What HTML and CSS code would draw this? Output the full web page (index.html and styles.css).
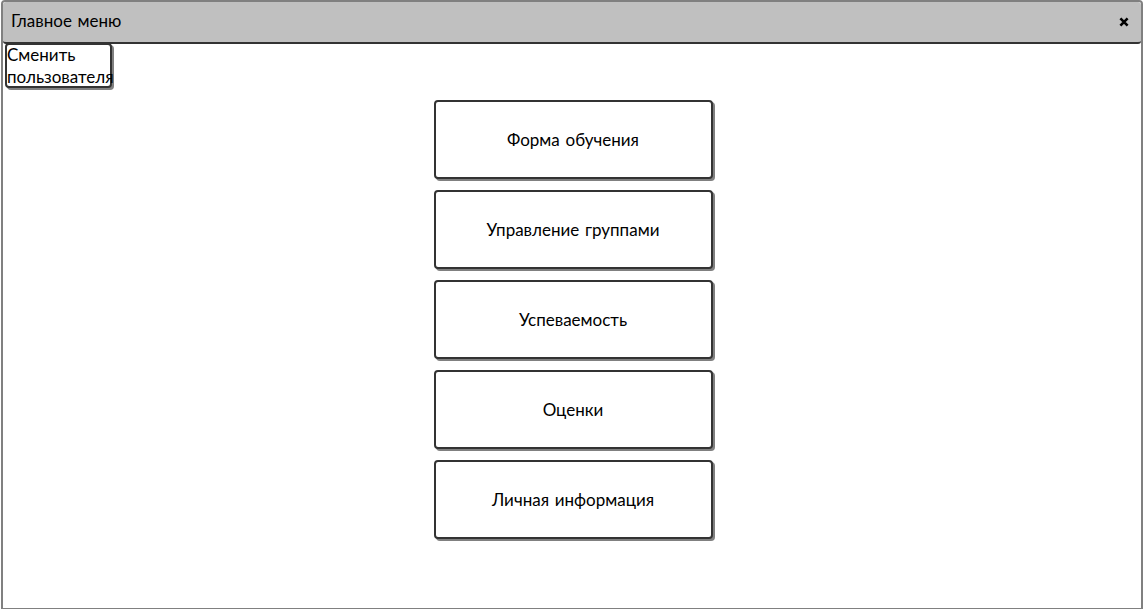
FILE: index.html
```html
<!DOCTYPE html>
<html lang="ru">
<head>
<meta charset="utf-8">
<title>Главное меню</title>
<link rel="stylesheet" href="styles.css">
</head>
<body>
<div class="window">
  <header class="titlebar">
    <h1 class="title">Главное меню</h1>
    <button class="close" type="button" aria-label="Закрыть">
      <svg class="close-icon" viewBox="0 0 10 10" aria-hidden="true"><path d="M1.4 1.4 8.6 8.6M8.6 1.4 1.4 8.6"/></svg>
    </button>
  </header>
  <main class="content">
    <button class="button switch-user" type="button">Сменить пользователя</button>
    <nav class="menu">
      <button class="button menu-item" type="button">Форма обучения</button>
      <button class="button menu-item" type="button">Управление группами</button>
      <button class="button menu-item" type="button">Успеваемость</button>
      <button class="button menu-item" type="button">Оценки</button>
      <button class="button menu-item" type="button">Личная информация</button>
    </nav>
  </main>
</div>
</body>
</html>
```
FILE: styles.css
```css
* {
  box-sizing: border-box;
}

body {
  margin: 0;
  padding: 0 1px;
  background: #fff;
  color: #000;
  font: 17px/22px "Comic Sans MS", "Comic Neue", Lato, "Open Sans", sans-serif;
}

.window {
  display: flex;
  flex-direction: column;
  min-height: 100vh;
  border: 2px solid #808080;
  border-bottom-width: 1px;
  border-radius: 4px 4px 0 0;
}

.titlebar {
  display: flex;
  align-items: center;
  justify-content: space-between;
  height: 42px;
  padding: 0 12px 0 8px;
  background: #c0c0c0;
  border-bottom: 2px solid #333;
  border-radius: 3px;
}

.title {
  margin: 0;
  font-size: 17px;
  font-weight: 400;
}

.close {
  display: flex;
  padding: 0;
  border: 0;
  background: none;
}

.close-icon {
  width: 10px;
  height: 10px;
  fill: none;
  stroke: #000;
  stroke-width: 2.6;
}

.content {
  display: flex;
  flex-direction: column;
  align-items: flex-start;
  padding-left: 2px;
}

.button {
  border: 2px solid #333;
  border-radius: 4px;
  background: #fff;
  box-shadow: 2px 2px 0 #808080;
  color: inherit;
  font: inherit;
}

.switch-user {
  width: 107px;
  height: 45px;
  margin-top: -1px;
  padding: 0;
  text-align: left;
}

.menu {
  display: flex;
  flex-direction: column;
  align-self: center;
  gap: 11px;
  width: 279px;
  margin: 12px 0;
}

.menu-item {
  height: 79px;
  padding: 2px 16px 0;
}
```
